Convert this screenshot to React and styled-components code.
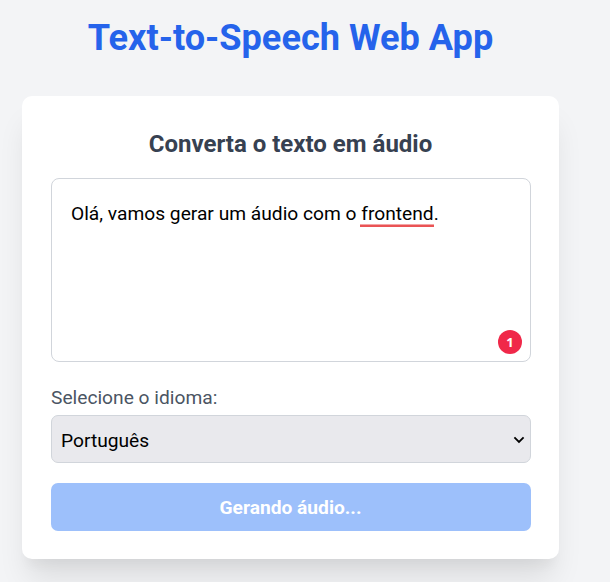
import React from "react";
import styled, { createGlobalStyle } from "styled-components";

const GlobalStyle = createGlobalStyle`
  *, *::before, *::after { box-sizing: border-box; }
  html, body { margin: 0; background: #f3f4f6; overflow: hidden; }
  body { font-family: Roboto, sans-serif; }
`;

const Page = styled.main`
  display: flex;
  flex-direction: column;
  align-items: center;
  width: 581px;
  height: 582px;
  padding-top: 16px;
`;

const Title = styled.h1`
  margin: 0 0 36px;
  font-size: 36.15px;
  line-height: 44px;
  font-weight: 700;
  color: #2563eb;
  white-space: nowrap;
`;

const Card = styled.section`
  display: flex;
  flex-direction: column;
  flex-shrink: 0;
  width: 537px;
  height: 463px;
  padding: 31px 28px 28px 29px;
  border-radius: 10px;
  background: #fff;
  box-shadow: 0 24px 30px -6px rgba(0, 0, 0, 0.1), 0 12px 12px -6px rgba(0, 0, 0, 0.04);
`;

const Heading = styled.h2`
  margin: 0 1px 17px 0;
  text-align: center;
  font-size: 24px;
  line-height: 34px;
  font-weight: 700;
  color: #374151;
`;

const Editor = styled.div`
  position: relative;
  flex-shrink: 0;
  height: 184px;
  padding: 19px;
  border: 1px solid #d1d5db;
  border-radius: 8px;
  font-size: 19.2px;
  line-height: 32px;
  color: #000;
`;

const Misspelled = styled.span`
  margin-left: -1px;
  padding: 0 0 2px 1px;
  background: linear-gradient(#f4a5a6 1px, #ea5455 1px) left bottom / 100% 3px no-repeat;
`;

const ErrorBadge = styled.span`
  position: absolute;
  right: 8px;
  bottom: 7px;
  display: flex;
  align-items: center;
  justify-content: center;
  width: 24px;
  height: 24px;
  border-radius: 50%;
  background: #f02849;
  color: #fff;
  font: 700 13px/24px "Noto Sans", sans-serif;
`;

const Label = styled.label`
  margin: 20px 0 1px;
  font-size: 19.2px;
  line-height: 32px;
  color: #4b5563;
`;

const Select = styled.div`
  display: flex;
  align-items: center;
  justify-content: space-between;
  height: 48px;
  padding: 2px 5px 0 9px;
  border: 1px solid #d1d5db;
  border-radius: 7px;
  background: #e9e9ed;
  font-size: 19.2px;
  color: #000;
`;

const Submit = styled.button`
  height: 48px;
  margin: 20px 0 0;
  padding: 1px 1px 0 0;
  border: 0;
  border-radius: 7px;
  background: #9dc0fb;
  color: #fff;
  font: 700 19.2px/28px Roboto, sans-serif;
`;

export default function App() {
  return (
    <>
      <GlobalStyle />
      <Page>
        <Title>Text-to-Speech Web App</Title>
        <Card>
          <Heading>Converta o texto em áudio</Heading>
          <Editor>
            Olá, vamos gerar um áudio com o <Misspelled>frontend</Misspelled>.
            <ErrorBadge>1</ErrorBadge>
          </Editor>
          <Label>Selecione o idioma:</Label>
          <Select>
            Português
            <svg width="12" height="8" viewBox="0 0 12 8" fill="none" stroke="#000" strokeWidth="1.8">
              <path d="M1.4 1.4 6 6 10.6 1.4" />
            </svg>
          </Select>
          <Submit>Gerando áudio...</Submit>
        </Card>
      </Page>
    </>
  );
}
